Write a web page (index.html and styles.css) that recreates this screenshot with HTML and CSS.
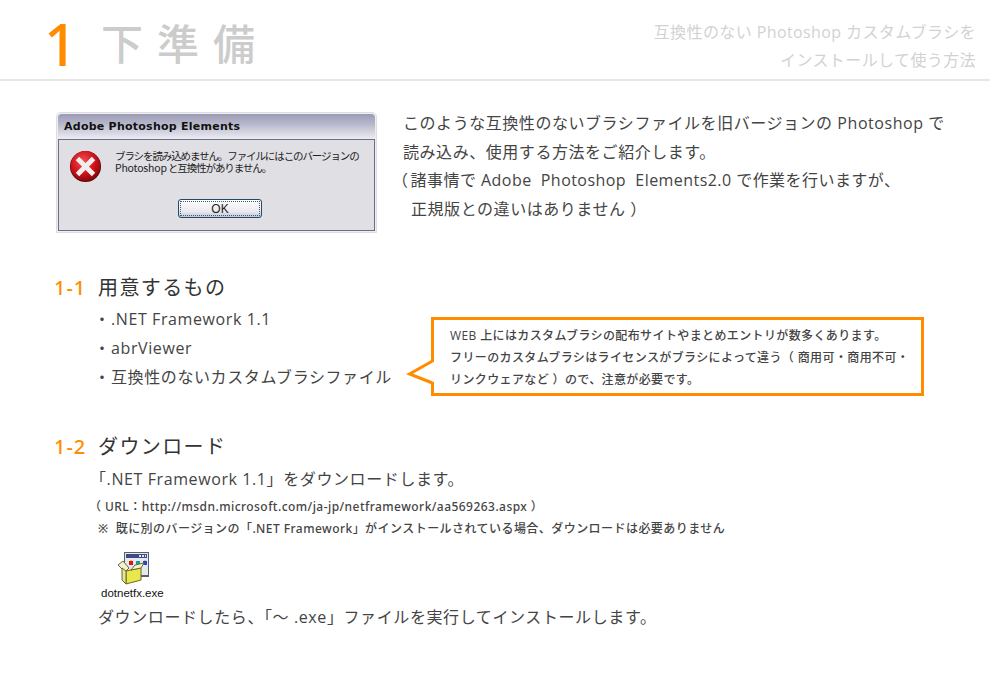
FILE: index.html
```html
<!DOCTYPE html>
<html lang="ja">
<head>
<meta charset="utf-8">
<title>下準備</title>
<link rel="stylesheet" href="styles.css">
</head>
<body>
<header class="top">
  <div class="chapter"><span class="chapter-num">1</span><h1 class="chapter-title">下準備</h1></div>
  <p class="subtitle">互換性のない Photoshop カスタムブラシを<br>インストールして使う方法</p>
</header>
<main class="main">
  <section class="intro">
    <div class="dialog">
      <div class="dialog-title">Adobe Photoshop Elements</div>
      <div class="dialog-body">
        <div class="dialog-msg">
          <svg class="err" width="33" height="33" viewBox="0 0 34 34">
            <defs><radialGradient id="r" cx=".42" cy=".35" r=".7"><stop offset="0" stop-color="#f0535a"/><stop offset=".55" stop-color="#d3141c"/><stop offset="1" stop-color="#7e0508"/></radialGradient></defs>
            <circle cx="17" cy="17" r="16" fill="#5b0a0c"/>
            <circle cx="17" cy="16.5" r="15.4" fill="url(#r)"/>
            <path d="M10.5 10.5 L23.5 23.5 M23.5 10.5 L10.5 23.5" stroke="#f4eeee" stroke-width="5" stroke-linecap="square" fill="none"/>
          </svg>
          <p class="dialog-text">ブラシを読み込めません。ファイルにはこのバージョンの<br><span class="dialog-latin">Photoshop</span> と互換性がありません。</p>
        </div>
        <div class="dialog-btn"><span class="dialog-btn-in">OK</span></div>
      </div>
    </div>
    <div class="intro-text">
      <p>このような互換性のないブラシファイルを旧バージョンの Photoshop で</p>
      <p>読み込み、使用する方法をご紹介します。</p>
      <p class="intro-note"><span class="paren">（</span> 諸事情で Adobe&nbsp; Photoshop&nbsp; Elements2.0 で作業を行いますが、</p>
      <p class="intro-indent">正規版との違いはありません ）</p>
    </div>
  </section>

  <section class="s1">
    <h2 class="head"><span class="head-num">1-1</span>用意するもの</h2>
    <div class="s1-row">
      <ul class="list">
        <li>.NET Framework 1.1</li>
        <li>abrViewer</li>
        <li>互換性のないカスタムブラシファイル</li>
      </ul>
      <div class="callout">
        <svg class="tail" width="29" height="36" viewBox="0 0 29 36"><rect x="25" y="7" width="3" height="20" fill="#fff"/><path d="M26.5 6 L3.5 19 L26.5 28" fill="#fff" stroke="#ff8c00" stroke-width="3"/></svg>
        <p>WEB 上にはカスタムブラシの配布サイトやまとめエントリが数多くあります。</p>
        <p>フリーのカスタムブラシはライセンスがブラシによって違う（ 商用可・商用不可・</p>
        <p>リンクウェアなど ）ので、注意が必要です。</p>
      </div>
    </div>
  </section>

  <section class="s2">
    <h2 class="head"><span class="head-num">1-2</span>ダウンロード</h2>
    <div class="s2-body">
      <p class="lead lead-quote">「.NET Framework 1.1」をダウンロードします。</p>
      <p class="small small-url">（ URL：http://msdn.microsoft.com/ja-jp/netframework/aa569263.aspx ）</p>
      <p class="small">※&nbsp; 既に別のバージョンの「.NET Framework」がインストールされている場合、ダウンロードは必要ありません</p>
      <div class="file">
        <svg width="34" height="34" viewBox="0 0 34 34" shape-rendering="crispEdges">
          <rect x="7" y="1" width="25" height="25" fill="#55606c"/>
          <rect x="8" y="2" width="23" height="22" fill="#e8e8ec"/>
          <rect x="9" y="3" width="21" height="4" fill="#3c4a88"/>
          <rect x="22" y="4" width="2" height="2" fill="#e8e8e8"/><rect x="25" y="4" width="2" height="2" fill="#e8e8e8"/><rect x="28" y="4" width="1" height="2" fill="#e8e8e8"/>
          <rect x="12" y="10" width="4" height="4" fill="#d81818"/><rect x="13" y="9" width="2" height="1" fill="#e8c820"/>
          <rect x="19" y="10" width="4" height="4" fill="#10a0a0"/><rect x="20" y="14" width="2" height="1" fill="#0a6060"/>
          <rect x="26" y="10" width="4" height="4" fill="#1848d8"/><rect x="27" y="9" width="2" height="1" fill="#e8c820"/>
          <path d="M1 14 L6 10 L12 17 L8 21 Z" fill="#f2f2d0" stroke="#6a6a30" stroke-width="1" shape-rendering="auto"/>
          <path d="M9 20 L24 17 L24 29 L9 33 Z" fill="#e8e84c" stroke="#6a6a20" stroke-width="1" shape-rendering="auto"/>
          <path d="M9 20 L5 17 L5 29 L9 33 Z" fill="#e4e4a0" stroke="#6a6a20" stroke-width="1" shape-rendering="auto"/>
          <path d="M24 17 L27 12 L18 14 L14 19 Z" fill="#f4f4d0" stroke="#6a6a30" stroke-width="1" shape-rendering="auto"/>
        </svg>
        <span class="file-name">dotnetfx.exe</span>
      </div>
      <p class="lead lead-last">ダウンロードしたら、「～ .exe」ファイルを実行してインストールします。</p>
    </div>
  </section>
</main>
</body>
</html>
```
FILE: styles.css
```css
* { box-sizing: border-box; margin: 0; padding: 0; }
html, body { background: #fff; }
body {
  width: 990px;
  height: 700px;
  overflow: hidden;
  font-family: "Open Sans", "Noto Sans CJK JP", sans-serif;
  color: #444;
}
.top {
  height: 81px;
  border-bottom: 2px solid #e6e6e6;
  display: flex;
  justify-content: space-between;
  padding: 0 14px 0 44px;
}
.chapter { display: flex; align-items: center; height: 88px; }
.chapter-num {
  width: 57px;
  font: 500 58px/88px "Noto Sans", sans-serif;
  color: #ff8c00;
}
.chapter-title {
  font: 500 42px/84px "Noto Sans CJK JP", sans-serif;
  letter-spacing: 14px;
  color: #ccc;
  align-self: flex-start;
}
.subtitle {
  padding-top: 18px;
  text-align: right;
  font-size: 16px;
  line-height: 28px;
  letter-spacing: .4px;
  color: #d2d2d2;
}
.main { padding: 30px 0 0 54px; }
.intro { display: flex; gap: 26px; }
.dialog {
  flex: none;
  width: 321px;
  height: 121px;
  border: 1px solid #dcdce2;
  border-radius: 5px 5px 0 0;
  padding: 1px;
  background: #eee;
  margin-left: 2px;
  margin-top: 1px;
}
.dialog-title {
  height: 25px;
  border-radius: 4px 4px 0 0;
  background: linear-gradient(#9a9ab4, #b8b8cc 40%, #ececf2);
  font: 700 11px/26px "DejaVu Sans", sans-serif;
  letter-spacing: .25px;
  color: #111;
  padding-left: 6px;
}
.dialog-body {
  height: 92px;
  border: 1px solid #6c6c88;
  background: #dfdfe4;
}
.dialog-msg { display: flex; padding: 10px 0 0 10px; gap: 13px; }
.err { flex: none; }
.dialog-text {
  font: 400 10.5px/12px "Noto Sans CJK JP", sans-serif;
  letter-spacing: -1.1px;
  color: #222;
  white-space: nowrap;
}
.dialog-latin { letter-spacing: -.2px; }
.dialog-btn {
  width: 84px;
  height: 19px;
  margin: 16px 0 0 119px;
  border: 1px solid #1c4a78;
  border-radius: 3px;
  background: linear-gradient(#fff, #e8e8f0 70%, #c4c4d4);
  padding: 1px;
}
.dialog-btn-in {
  display: block;
  height: 15px;
  border: 1px dotted #555;
  text-align: center;
  font: 400 12px/14px "Liberation Sans", sans-serif;
  color: #222;
}
.intro-text {
  margin-top: -2px;
  font-size: 16px;
  letter-spacing: .55px;
  line-height: 28.7px;
  white-space: nowrap;
  color: #444;
}
.intro-note { letter-spacing: .45px; }
.paren { letter-spacing: -9px; margin-left: -11px; margin-right: 7px; }
.intro-indent { margin-left: 8px; }
.s1 { margin-top: 40px; }
.head {
  display: flex;
  font-weight: 400;
  font-size: 20px;
  line-height: 30px;
  letter-spacing: 1.4px;
  color: #333;
}
.head-num { width: 44px; font-weight: 500; color: #ff8c00; letter-spacing: 1px; font-family: "Noto Sans", sans-serif; }
.s1-row { display: flex; }
.list {
  list-style: none;
  width: 377px;
  padding: 2px 0 0 44px;
  font-size: 16px;
  line-height: 29px;
  letter-spacing: .6px;
}
.list li { white-space: nowrap; }
.list li::before { content: "・"; display: inline-block; width: 17px; margin-left: -4px; letter-spacing: 0; }
.callout {
  position: relative;
  width: 493px;
  height: 79px;
  margin-top: 14px;
  border: 3px solid #ff8c00;
  padding: 5px 0 0 16px;
  font-size: 12px;
  font-weight: 500;
  line-height: 22px;
  letter-spacing: .38px;
  color: #444;
  white-space: nowrap;
}
.tail { position: absolute; left: -28px; top: 35px; overflow: visible; }
.s2 { margin-top: 36px; }
.s2-body { padding-left: 44px; margin-top: 3px; }
.lead { font-size: 16px; line-height: 28px; letter-spacing: .6px; white-space: nowrap; }
.lead-quote { margin-left: -8px; margin-bottom: 3px; }
.lead-last { margin-top: 3px; }
.small {
  font-family: "Noto Sans", "Noto Sans CJK JP", sans-serif;
  font-size: 12px;
  line-height: 22px;
  font-weight: 500;
  letter-spacing: .45px;
  color: #444;
  white-space: nowrap;
}
.small-url { margin-left: -9px; }
.file {
  margin-top: 11px;
  display: flex;
  flex-direction: column;
  align-items: flex-start;
}
.file svg { margin-left: 19px; }
.file-name { font: 400 11.5px/14px "Liberation Sans", sans-serif; color: #111; margin: 1px 0 0 3px; }
```
